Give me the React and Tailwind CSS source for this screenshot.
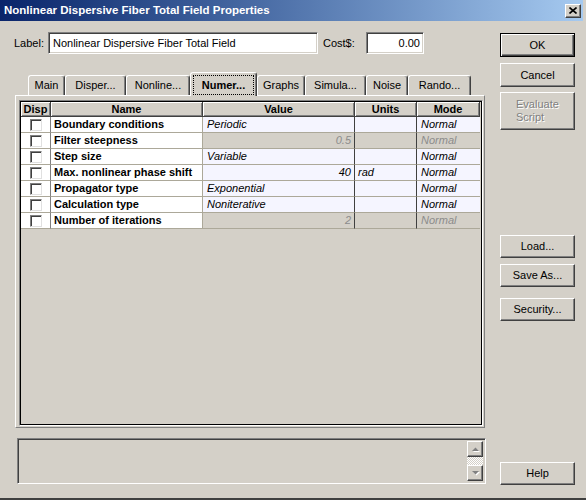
import React from 'react'

const raised =
  'bg-[#D4D0C8] border border-t-white border-l-white border-r-[#404040] border-b-[#404040] shadow-[inset_-1px_-1px_0_#808080]'
const sunken =
  'border border-t-[#808080] border-l-[#808080] border-r-white border-b-white shadow-[inset_1px_1px_0_#404040,inset_-1px_-1px_0_#D4D0C8]'
const disabledText = 'text-[#808080] [text-shadow:1px_1px_0_#fff]'

const tabs = [
  { label: 'Main', w: 'w-[37px]' },
  { label: 'Disper...', w: 'w-[61px]' },
  { label: 'Nonline...', w: 'w-[64px]' },
  { label: 'Numer...', w: 'w-[67px]', active: true },
  { label: 'Graphs', w: 'w-[48px]' },
  { label: 'Simula...', w: 'w-[61px]' },
  { label: 'Noise', w: 'w-[42px]' },
  { label: 'Rando...', w: 'w-[63px]' },
]

const rows = [
  { name: 'Boundary conditions', value: 'Periodic', on: true },
  { name: 'Filter steepness', value: '0.5', num: true },
  { name: 'Step size', value: 'Variable', on: true },
  { name: 'Max. nonlinear phase shift', value: '40', num: true, units: 'rad', on: true },
  { name: 'Propagator type', value: 'Exponential', on: true },
  { name: 'Calculation type', value: 'Noniterative', on: true },
  { name: 'Number of iterations', value: '2', num: true },
]

function Button({ children, className = '', isDefault = false }) {
  if (isDefault)
    return (
      <div
        className={`flex items-center justify-center bg-[#D4D0C8] border border-black shadow-[inset_1px_1px_0_#fff,inset_-1px_-1px_0_#404040,inset_-2px_-2px_0_#808080] ${className}`}
      >
        {children}
      </div>
    )
  return <div className={`flex items-center justify-center ${raised} ${className}`}>{children}</div>
}

function Arrow({ up }) {
  return (
    <svg width="7" height="4" viewBox="0 0 7 4" className="overflow-visible">
      <polygon points={up ? '1,5 8,5 4.5,1.5' : '1,1 8,1 4.5,4.5'} fill="#fff" />
      <polygon points={up ? '0,4 7,4 3.5,0.5' : '0,0 7,0 3.5,3.5'} fill="#808080" />
    </svg>
  )
}

export default function App() {
  return (
    <div className="w-[586px] h-[500px] bg-[#D4D0C8] flex flex-col overflow-hidden font-['Liberation_Sans',Arial,sans-serif] text-[11px] text-black border-b-2 border-b-[#404040]">
      {/* Title bar */}
      <div className="w-[583px] h-[21px] shrink-0 flex items-center justify-between pl-[4px] pr-[2px] bg-linear-to-r from-[#0A246A] to-[#A6CAF0]">
        <span className="text-white font-bold text-[11.5px] leading-none">
          Nonlinear Dispersive Fiber Total Field Properties
        </span>
        <div className={`w-[16px] h-[14px] flex items-center justify-center ${raised}`}>
          <svg width="8" height="7" viewBox="0 0 8 7">
            <path d="M0.5 0.5 L7.5 6.5 M7.5 0.5 L0.5 6.5" stroke="#000" strokeWidth="1.6" />
          </svg>
        </div>
      </div>

      <div className="flex flex-1">
        {/* Left side */}
        <div className="w-[500px] flex flex-col">
          <div className="mt-[11px] h-[22px] flex items-center">
            <span className="pl-[14px] w-[48px]">Label:</span>
            <div className={`w-[270px] h-[22px] bg-white flex items-center pl-[4px] ${sunken}`}>
              Nonlinear Dispersive Fiber Total Field
            </div>
            <span className="w-[48px] pl-[5px]">Cost$:</span>
            <div className={`w-[58px] h-[22px] bg-white flex items-center justify-end pr-[3px] ${sunken}`}>
              0.00
            </div>
          </div>

          {/* Tabs */}
          <div className="mt-[18px] h-[23px] flex items-start pl-[28px]">
            {tabs.map((t) =>
              t.active ? (
                <div
                  key={t.label}
                  className={`${t.w} h-[24px] relative z-10 flex items-center justify-center bg-[#D4D0C8] rounded-t-[3px] border-t border-l border-r border-t-white border-l-white border-r-[#404040] shadow-[inset_-1px_0_0_#808080] px-[2px] pt-[2px] pb-[1px]`}
                >
                  <div className="w-full h-full flex items-center justify-center border border-dotted border-black font-bold">
                    {t.label}
                  </div>
                </div>
              ) : (
                <div
                  key={t.label}
                  className={`${t.w} h-[20px] mt-[3px] flex items-center justify-center rounded-t-[3px] border-t border-l border-r border-t-white border-l-white border-r-[#404040] shadow-[inset_-1px_0_0_#808080]`}
                >
                  {t.label}
                </div>
              )
            )}
          </div>

          {/* Panel */}
          <div className="ml-[15px] w-[470px] h-[333px] border border-t-white border-l-white border-r-[#808080] border-b-[#808080] pl-[3px] pr-[1px] pt-[4px] pb-[1px]">
            <div className="w-full h-full border border-t-[#808080] border-l-[#808080] border-r-white border-b-white">
              <div className="w-full h-full border border-black bg-[#D4D0C8]">
                <div className="grid grid-cols-[30px_152px_152px_62px_63px]">
                  {['Disp', 'Name', 'Value', 'Units', 'Mode'].map((h) => (
                    <div
                      key={h}
                      className="h-[15px] flex items-center justify-center font-bold text-[11px] bg-[#D4D0C8] border-r border-b border-[#404040] shadow-[inset_1px_1px_0_#fff,inset_-1px_-1px_0_#808080]"
                    >
                      {h}
                    </div>
                  ))}
                  {rows.map((r) => {
                    const cell = r.on ? 'bg-[#F5F5FF]' : 'bg-[#D4D0C8] text-[#8C8C8C]'
                    return (
                      <React.Fragment key={r.name}>
                        <div className="h-[16px] bg-white flex items-center justify-center border-r border-b border-r-[#808080] border-b-[#ACA899]">
                          <div className="w-[12px] h-[12px] bg-white border border-t-[#808080] border-l-[#808080] border-r-[#E0E0E0] border-b-[#E0E0E0] shadow-[inset_1px_1px_0_#404040]" />
                        </div>
                        <div className="h-[16px] bg-white flex items-center pl-[3px] font-bold whitespace-nowrap border-r border-b border-r-[#ACA899] border-b-[#ACA899]">
                          {r.name}
                        </div>
                        <div
                          className={`h-[16px] flex items-center italic border-r border-b border-r-[#404040] border-r-dotted border-b-[#ACA899] ${
                            r.num ? 'justify-end pr-[3px]' : 'pl-[4px]'
                          } ${cell}`}
                        >
                          {r.value}
                        </div>
                        <div
                          className={`h-[16px] flex items-center pl-[3px] italic border-r border-b border-r-[#404040] border-r-dotted border-b-[#ACA899] ${cell}`}
                        >
                          {r.units}
                        </div>
                        <div className={`h-[16px] flex items-center pl-[4px] italic border-b border-b-[#ACA899] ${cell}`}>
                          Normal
                        </div>
                      </React.Fragment>
                    )
                  })}
                </div>
              </div>
            </div>
          </div>

          {/* Message box */}
          <div className={`mt-[10px] ml-[17px] w-[469px] h-[46px] bg-[#D4D0C8] flex justify-end p-[2px] ${sunken}`}>
            <div className="w-[16px] flex flex-col">
              <div className={`h-[16px] flex items-center justify-center ${raised}`}>
                <Arrow up />
              </div>
              <div className="flex-1 bg-[repeating-conic-gradient(#fff_0_25%,#D4D0C8_0_50%)] bg-[length:2px_2px]" />
              <div className={`h-[16px] flex items-center justify-center ${raised}`}>
                <Arrow />
              </div>
            </div>
          </div>
        </div>

        {/* Right buttons */}
        <div className="w-[75px] flex flex-col">
          <Button isDefault className="mt-[12px] h-[24px]">OK</Button>
          <Button className="mt-[6px] h-[24px]">Cancel</Button>
          <div className={`mt-[5px] h-[38px] flex flex-col justify-center pl-[15px] leading-[13px] ${raised} ${disabledText}`}>
            <span>Evaluate</span>
            <span>Script</span>
          </div>
          <Button className="mt-[105px] h-[23px]">Load...</Button>
          <Button className="mt-[6px] h-[23px]">Save As...</Button>
          <Button className="mt-[11px] h-[23px]">Security...</Button>
          <Button className="mt-[141px] h-[23px]">Help</Button>
        </div>
      </div>
    </div>
  )
}
